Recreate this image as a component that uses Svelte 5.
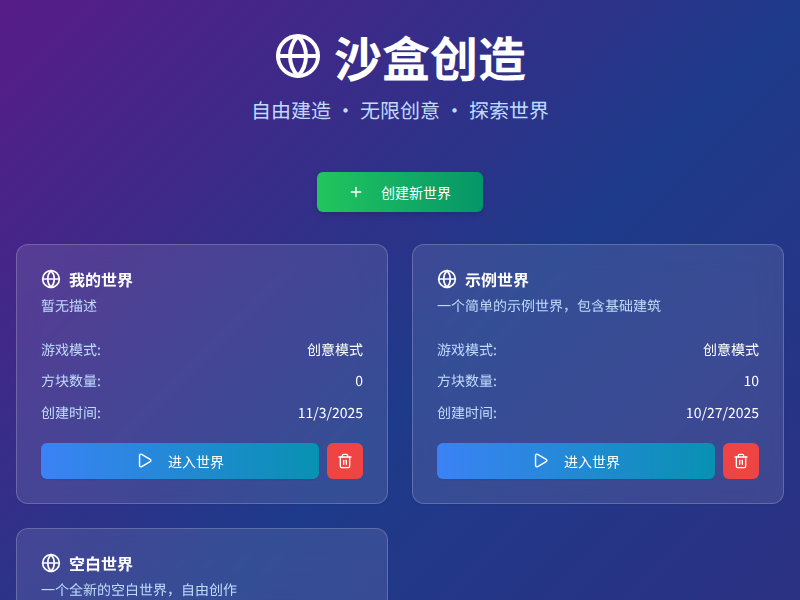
<script>
  const worlds = [
    { name: '我的世界', desc: '暂无描述', mode: '创意模式', blocks: '0', date: '11/3/2025' },
    { name: '示例世界', desc: '一个简单的示例世界，包含基础建筑', mode: '创意模式', blocks: '10', date: '10/27/2025' },
    { name: '空白世界', desc: '一个全新的空白世界，自由创作', mode: '创意模式', blocks: '0', date: '10/27/2025' }
  ];
</script>

<svelte:head><title>沙盒创造</title></svelte:head>

{#snippet globe(cls)}
  <svg class={cls} viewBox="0 0 24 24" fill="none" stroke="currentColor" stroke-width="2" stroke-linecap="round" stroke-linejoin="round">
    <circle cx="12" cy="12" r="10" />
    <path d="M12 2a14.5 14.5 0 0 0 0 20 14.5 14.5 0 0 0 0-20" />
    <path d="M2 12h20" />
  </svg>
{/snippet}

<div class="page">
  <header class="header">
    <h1 class="title">{@render globe('title-icon')}<span>沙盒创造</span></h1>
    <p class="subtitle">自由建造 · 无限创意 · 探索世界</p>
  </header>

  <div class="create-row">
    <button class="create">
      <svg class="plus" viewBox="0 0 24 24" fill="none" stroke="currentColor" stroke-width="2" stroke-linecap="round" stroke-linejoin="round">
        <path d="M5 12h14" /><path d="M12 5v14" />
      </svg>
      <span>创建新世界</span>
    </button>
  </div>

  <div class="grid">
    {#each worlds as w}
      <article class="card">
        <h3 class="name">{@render globe('name-icon')}<span>{w.name}</span></h3>
        <p class="desc">{w.desc}</p>
        <dl class="stats">
          <div class="stat"><dt>游戏模式:</dt><dd>{w.mode}</dd></div>
          <div class="stat"><dt>方块数量:</dt><dd>{w.blocks}</dd></div>
          <div class="stat"><dt>创建时间:</dt><dd>{w.date}</dd></div>
        </dl>
        <div class="actions">
          <button class="enter">
            <svg class="play" viewBox="0 0 24 24" fill="none" stroke="currentColor" stroke-width="2" stroke-linecap="round" stroke-linejoin="round">
              <path d="M5 5a2 2 0 0 1 3.008-1.728l11.997 6.998a2 2 0 0 1 .003 3.458l-12 7A2 2 0 0 1 5 19z" />
            </svg>
            <span>进入世界</span>
          </button>
          <button class="del" aria-label="删除">
            <svg class="trash" viewBox="0 0 24 24" fill="none" stroke="currentColor" stroke-width="2" stroke-linecap="round" stroke-linejoin="round">
              <path d="M3 6h18" />
              <path d="M19 6v14c0 1-1 2-2 2H7c-1 0-2-1-2-2V6" />
              <path d="M8 6V4c0-1 1-2 2-2h4c1 0 2 1 2 2v2" />
              <path d="M10 11v6" /><path d="M14 11v6" />
            </svg>
          </button>
        </div>
      </article>
    {/each}
  </div>
</div>

<style>
  :global(body) {
    margin: 0;
    font-family: "Noto Sans CJK SC", "Noto Sans", sans-serif;
    text-rendering: geometricPrecision;
  }
  .page {
    box-sizing: border-box;
    min-height: 600px;
    padding: 24px 16px 32px;
    background: linear-gradient(135deg, #581c87, #1e3a8a 50%, #312e81);
    color: #fff;
  }
  .header { text-align: center; margin-bottom: 32px; }
  .title {
    display: flex; align-items: center; justify-content: center; gap: 12px;
    margin: 0 0 8px; font-size: 48px; line-height: 1; font-weight: 700; height: 64px;
  }
  .title-icon { width: 48px; height: 48px; }
  .subtitle { margin: 0; font-size: 20px; line-height: 28px; color: #bfdbfe; }
  .create-row { display: flex; justify-content: center; margin-bottom: 32px; padding-top: 16px; }
  button { font-family: inherit; color: #fff; border: 0; display: flex; align-items: center; justify-content: center; }
  .create {
    width: 166px; height: 40px; gap: 8px; border-radius: 6px; font-size: 14px;
    background: linear-gradient(90deg, #22c55e, #059669);
    box-shadow: 0 4px 6px -1px rgba(0,0,0,.1), 0 2px 4px -2px rgba(0,0,0,.1);
  }
  .plus { width: 16px; height: 16px; margin: 0 9px 0 -1px; flex: none; }
  .trash { width: 16px; height: 16px; flex: none; }
  .play { width: 17px; height: 17px; margin-right: 15px; flex: none; }
  .grid { display: grid; grid-template-columns: 1fr 1fr; gap: 24px; }
  .card {
    box-sizing: border-box; padding: 22px 24px 24px;
    background: rgba(255,255,255,.1); border: 1px solid rgba(255,255,255,.2); border-radius: 12px;
    box-shadow: 0 1px 2px rgba(0,0,0,.05);
    backdrop-filter: blur(12px);
  }
  .name { display: flex; align-items: center; gap: 8px; margin: 0; font-size: 16px; line-height: 24px; font-weight: 700; }
  .name-icon { width: 20px; height: 20px; }
  .desc { margin: 5px 0 0; font-size: 14px; line-height: 20px; color: #bfdbfe; }
  .stats { display: flex; flex-direction: column; gap: 11.4px; margin: 23.95px 0 20.25px; }
  .stat { display: flex; justify-content: space-between; height: 20px; font-size: 14px; line-height: 20px; }
  dt { color: #bfdbfe; }
  dd { margin: 0; }
  .actions { display: flex; gap: 8px; }
  .enter {
    flex: 1; height: 36px; border-radius: 6px; font-size: 14px;
    background: linear-gradient(90deg, #3b82f6, #0891b2);
    box-shadow: 0 1px 2px rgba(0,0,0,.05);
  }
  .del { width: 36px; height: 36px; border-radius: 6px; background: #ef4444; padding: 0; }
</style>
